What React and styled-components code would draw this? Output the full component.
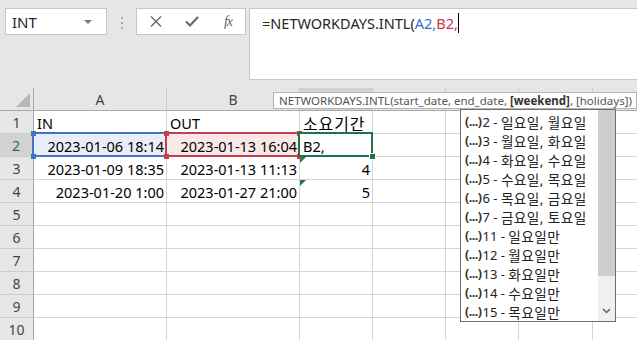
import React from 'react';
import styled, { createGlobalStyle } from 'styled-components';

const GlobalStyle = createGlobalStyle`
  html, body { margin: 0; padding: 0; background: #e6e6e6; overflow: hidden; }
  body { font-family: "Noto Sans", "Noto Sans CJK KR", sans-serif; }
`;

const GRID = '#d4d4d4';
const GREEN = '#217346';
const BLUE = '#4472c4';
const RED = '#c43e4b';

const Page = styled.div`
  width: 637px;
  height: 340px;
  overflow: hidden;
  background: #e6e6e6;
`;

// formula bar strip
const Ribbon = styled.div`
  display: flex;
  align-items: flex-start;
  height: 88px;
  box-sizing: border-box;
  padding: 8px 0 0 5px;
`;

const NameBox = styled.div`
  width: 102px;
  height: 27px;
  box-sizing: border-box;
  background: #fff;
  border: 1px solid #c6c6c6;
  display: flex;
  align-items: center;
  justify-content: space-between;
  padding: 0 14px 0 6px;
  font-size: 15px;
  color: #262626;
`;

const Caret = styled.span`
  width: 0;
  height: 0;
  border-left: 4px solid transparent;
  border-right: 4px solid transparent;
  border-top: 4px solid #777;
`;

const Grip = styled.div`
  display: flex;
  flex-direction: column;
  gap: 3px;
  margin: 9px 0 0 14px;
  > i { display: block; width: 2px; height: 2px; background: #a8a8a8; }
`;

const ActionGroup = styled.div`
  display: grid;
  grid-template-columns: repeat(3, 36px);
  align-items: center;
  justify-items: center;
  margin-left: 13px;
  width: 110px;
  height: 27px;
  box-sizing: border-box;
  padding-left: 1px;
  background: #fff;
  border: 1px solid #c6c6c6;
  color: #666;
`;

const Fx = styled.span`
  font-family: "Liberation Serif", serif;
  font-style: italic;
  font-size: 14px;
  color: #666;
  letter-spacing: -1px;
`;

const FormulaBox = styled.div`
  flex: 1;
  margin: 0 -2px 0 3px;
  height: 72px;
  box-sizing: border-box;
  background: #fff;
  border: 1px solid #c6c6c6;
  padding: 2px 0 0 12px;
  font-size: 14.5px;
  line-height: 24px;
  color: #262626;
  white-space: nowrap;
  display: flex;
  align-items: flex-start;
`;

const Ref = styled.span`
  color: ${p => p.$color};
`;

const Cursor = styled.span`
  display: inline-block;
  width: 1px;
  height: 20px;
  margin-top: 2px;
  background: #000;
`;

// Korean runs: the sheet font draws hangul a bit larger and looser
const Ko = styled.span`
  font-size: ${p => p.$size || '1em'};
  letter-spacing: ${p => p.$track || '0'};
`;

// sheet
const SheetArea = styled.div`
  position: relative;
`;

const Sheet = styled.div`
  display: grid;
  grid-template-columns: 34px 133px 133px 73px 73px 73px 74px 74px;
  grid-auto-rows: 23px;
  background: #fff;
`;

const Corner = styled.div`
  background: #e6e6e6;
  border-right: 1px solid #a9a9a9;
  border-bottom: 1px solid #a9a9a9;
  display: flex;
  align-items: flex-end;
  justify-content: flex-end;
  padding: 0 3px 3px 0;
  &::after {
    content: '';
    width: 0;
    height: 0;
    border-left: 14px solid transparent;
    border-bottom: 14px solid #b7b7b7;
  }
`;

const ColHead = styled.div`
  background: ${p => (p.$active ? '#d2d2d2' : '#e6e6e6')};
  border-right: 1px solid #cdcdcd;
  border-bottom: 1px solid #a9a9a9;
  display: flex;
  align-items: center;
  justify-content: center;
  font-size: 14px;
  color: #444;
`;

const RowHead = styled.div`
  background: ${p => (p.$active ? '#d2d2d2' : '#e6e6e6')};
  border-bottom: 1px solid #cdcdcd;
  border-right: ${p => (p.$active ? `2px solid ${GREEN}` : '1px solid #a9a9a9')};
  display: flex;
  align-items: center;
  justify-content: center;
  font-size: 14px;
  color: ${p => (p.$active ? GREEN : '#444')};
`;

const selColor = { blue: BLUE, red: RED, green: GREEN };
const selFill = { blue: '#e8eef8', red: '#fae7e8', green: '#fff' };
const selZ = { blue: 1, red: 2, green: 3 };

const Cell = styled.div`
  border-right: 1px solid ${GRID};
  border-bottom: 1px solid ${GRID};
  display: flex;
  align-items: center;
  justify-content: ${p => (p.$num ? 'flex-end' : 'flex-start')};
  padding: 1px 2px 0 3px;
  font-size: 14.5px;
  color: #000;
  white-space: nowrap;
  background: ${p => (p.$sel ? selFill[p.$sel] : '#fff')};
  ${p => (p.$sel || p.$flag) && 'position: relative;'}
  ${p => p.$sel && `z-index: ${selZ[p.$sel]};`}
  ${p =>
    p.$sel &&
    `&::after {
      content: '';
      position: absolute;
      top: -2px; left: -2px; right: -1px; bottom: -1px;
      border: 2px solid ${selColor[p.$sel]};
      pointer-events: none;
    }`}
  ${p =>
    p.$flag &&
    `&::before {
      content: '';
      position: absolute;
      top: 0; left: 0;
      border-top: 6px solid #1e7e45;
      border-right: 6px solid transparent;
    }`}
`;

const Handle = styled.span`
  position: absolute;
  z-index: 2;
  width: 5px;
  height: 5px;
  background: ${p => p.$color};
  ${p => (p.$v === 't' ? 'top: -3px;' : 'bottom: -3px;')}
  ${p => (p.$h === 'l' ? 'left: -3px;' : 'right: -3px;')}
  ${p => p.$ring && 'outline: 1px solid #fff;'}
`;

// function tooltip
const Tip = styled.div`
  position: absolute;
  top: 4px;
  left: 273px;
  width: 364px;
  height: 17px;
  box-sizing: border-box;
  background: #fff;
  border: 1px solid #b4b4b4;
  padding: 0 0 0 5px;
  font-size: 11.5px;
  line-height: 15px;
  color: #555;
  white-space: nowrap;
  z-index: 6;
  b { color: #333; font-weight: 700; }
`;

// autocomplete list
const Suggest = styled.div`
  position: absolute;
  top: 21px;
  left: 460px;
  width: 156px;
  height: 213px;
  box-sizing: border-box;
  background: #fff;
  border: 1px solid #6e6e6e;
  display: flex;
  z-index: 5;
`;

const ItemList = styled.div`
  flex: 1;
  display: flex;
  flex-direction: column;
`;

const Highlight = styled.div`
  height: 2px;
  margin: 0 0 2px 20px;
  background: #2b6cc4;
`;

const Item = styled.div`
  display: flex;
  align-items: center;
  height: 19px;
  padding-left: 4px;
  font-size: 13px;
  color: #222;
  white-space: pre;
`;

const ListIcon = styled.span`
  font-weight: 700;
  font-size: 12.5px;
  letter-spacing: -0.5px;
  color: #333;
  margin-right: 1px;
`;

const ScrollBar = styled.div`
  width: 17px;
  display: flex;
  flex-direction: column;
  background: #f0f0f0;
`;

const Thumb = styled.div`
  height: 166px;
  background: #cdcdcd;
`;

const ArrowSlot = styled.div`
  margin-top: auto;
  height: 20px;
  display: flex;
  align-items: center;
  justify-content: center;
`;

const rows = [
  [{ v: 'IN' }, { v: 'OUT' }, { v: '소요기간', ko: true }],
  [
    { v: '2023-01-06 18:14', num: true, sel: 'blue' },
    { v: '2023-01-13 16:04', num: true, sel: 'red' },
    { v: 'B2,', sel: 'green' },
  ],
  [{ v: '2023-01-09 18:35', num: true }, { v: '2023-01-13 11:13', num: true }, { v: '4', num: true, flag: true }],
  [{ v: '2023-01-20 1:00', num: true }, { v: '2023-01-27 21:00', num: true }, { v: '5', num: true, flag: true }],
];

const COLS = ['A', 'B', 'C', 'D', 'E', 'F', 'G'];
const ROW_COUNT = 10;

const handles = {
  blue: [['t', 'l'], ['b', 'l'], ['t', 'r'], ['b', 'r']],
  red: [['t', 'l'], ['b', 'l'], ['t', 'r'], ['b', 'r']],
  green: [['b', 'r']],
};

const options = [
  ['2', '일요일, 월요일'],
  ['3', '월요일, 화요일'],
  ['4', '화요일, 수요일'],
  ['5', '수요일, 목요일'],
  ['6', '목요일, 금요일'],
  ['7', '금요일, 토요일'],
  ['11', '일요일만'],
  ['12', '월요일만'],
  ['13', '화요일만'],
  ['14', '수요일만'],
  ['15', '목요일만'],
];

const CloseIcon = () => (
  <svg width="12" height="11" viewBox="0 0 12 11">
    <path d="M1 0.5 L11 10.5 M11 0.5 L1 10.5" stroke="#6a6a6a" strokeWidth="1.4" fill="none" />
  </svg>
);

const CheckIcon = () => (
  <svg width="14" height="11" viewBox="0 0 14 11">
    <path d="M1 5.5 L5 9.5 L13 1" stroke="#6a6a6a" strokeWidth="2.2" fill="none" />
  </svg>
);

const ChevronDown = () => (
  <svg width="9" height="6" viewBox="0 0 9 6">
    <path d="M1 1 L4.5 4.5 L8 1" stroke="#606060" strokeWidth="1.5" fill="none" />
  </svg>
);

function SheetCell({ cell }) {
  const c = cell || {};
  return (
    <Cell $num={c.num} $sel={c.sel} $flag={c.flag}>
      {c.ko ? (
        <Ko $size="1.1em" $track="0.06em">
          {c.v}
        </Ko>
      ) : (
        c.v
      )}
      {c.sel &&
        handles[c.sel].map(([v, h]) => (
          <Handle key={v + h} $v={v} $h={h} $color={selColor[c.sel]} $ring={c.sel === 'green'} />
        ))}
    </Cell>
  );
}

export default function App() {
  return (
    <Page>
      <GlobalStyle />
      <Ribbon>
        <NameBox>
          INT
          <Caret />
        </NameBox>
        <Grip>
          <i />
          <i />
          <i />
        </Grip>
        <ActionGroup>
          <CloseIcon />
          <CheckIcon />
          <Fx>fx</Fx>
        </ActionGroup>
        <FormulaBox>
          =NETWORKDAYS.INTL(<Ref $color="#3a6bc9">A2,</Ref>
          <Ref $color="#c8374a">B2,</Ref>
          <Cursor />
        </FormulaBox>
      </Ribbon>

      <SheetArea>
        <Sheet>
          <Corner />
          {COLS.map(col => (
            <ColHead key={col} $active={col === 'C'}>
              {col}
            </ColHead>
          ))}
          {Array.from({ length: ROW_COUNT }, (_, r) => (
            <React.Fragment key={r}>
              <RowHead $active={r === 1}>{r + 1}</RowHead>
              {COLS.map((col, ci) => (
                <SheetCell key={col} cell={rows[r] && rows[r][ci]} />
              ))}
            </React.Fragment>
          ))}
        </Sheet>

        <Tip>
          NETWORKDAYS.INTL(start_date, end_date, <b>[weekend]</b>, [holidays])
        </Tip>

        <Suggest>
          <ItemList>
            <Highlight />
            {options.map(([n, label]) => (
              <Item key={n}>
                <ListIcon>(...)</ListIcon>
                {n} - <Ko $size="1.05em" $track="0.03em">{label}</Ko>
              </Item>
            ))}
          </ItemList>
          <ScrollBar>
            <Thumb />
            <ArrowSlot>
              <ChevronDown />
            </ArrowSlot>
          </ScrollBar>
        </Suggest>
      </SheetArea>
    </Page>
  );
}
